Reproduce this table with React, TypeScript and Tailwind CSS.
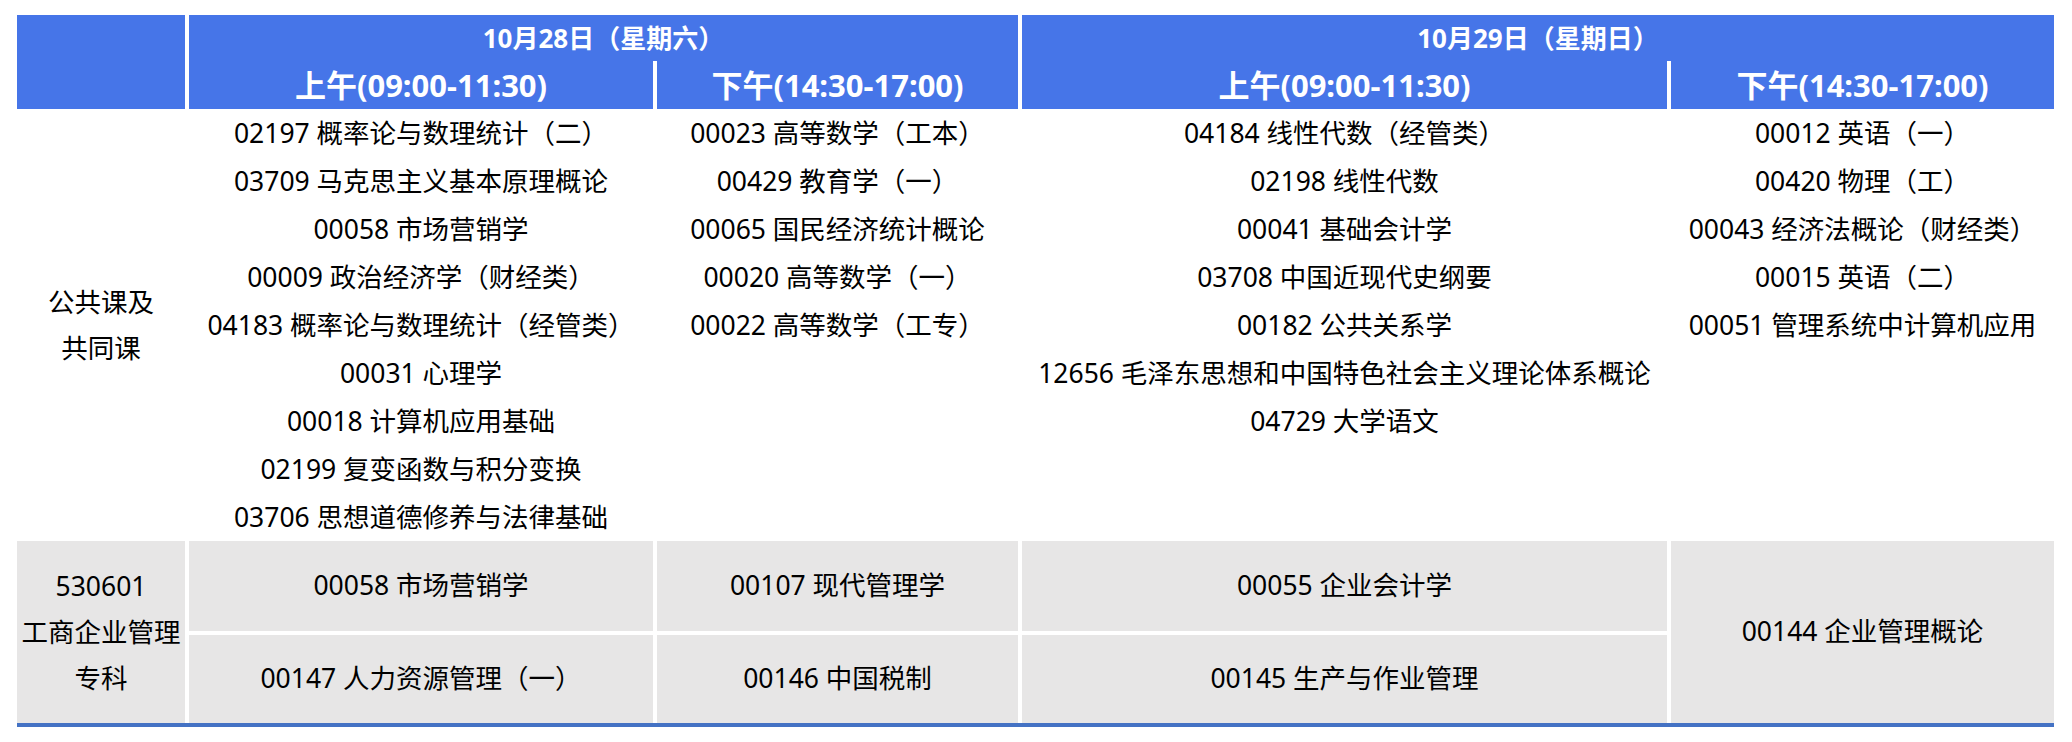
const day1Am = [
  "02197 概率论与数理统计（二）",
  "03709 马克思主义基本原理概论",
  "00058 市场营销学",
  "00009 政治经济学（财经类）",
  "04183 概率论与数理统计（经管类）",
  "00031 心理学",
  "00018 计算机应用基础",
  "02199 复变函数与积分变换",
  "03706 思想道德修养与法律基础",
];

const day1Pm = [
  "00023 高等数学（工本）",
  "00429 教育学（一）",
  "00065 国民经济统计概论",
  "00020 高等数学（一）",
  "00022 高等数学（工专）",
];

const day2Am = [
  "04184 线性代数（经管类）",
  "02198 线性代数",
  "00041 基础会计学",
  "03708 中国近现代史纲要",
  "00182 公共关系学",
  "12656 毛泽东思想和中国特色社会主义理论体系概论",
  "04729 大学语文",
];

const day2Pm = [
  "00012 英语（一）",
  "00420 物理（工）",
  "00043 经济法概论（财经类）",
  "00015 英语（二）",
  "00051 管理系统中计算机应用",
];

function CourseList({ items }: { items: string[] }) {
  return (
    <div className="flex flex-col items-center">
      {items.map((c) => (
        <div key={c} className="leading-[48px] whitespace-nowrap">
          {c}
        </div>
      ))}
    </div>
  );
}

export default function App() {
  const cols = "grid grid-cols-[168px_464px_361px_645px_383px] gap-x-1";
  return (
    <div className="min-h-[742px] w-full bg-white font-['Noto_Sans','Noto_Sans_CJK_SC',sans-serif] text-black">
      <div className="ml-[17px] pt-[15px] w-[2037px]">
        {/* header */}
        <div className={`${cols} grid-rows-[46px_48px] text-white font-bold`}>
          <div className="row-span-2 bg-[#4675e8]" />
          <div className="col-span-2 flex items-center justify-center bg-[#4675e8] text-[26px]">
            10月28日（星期六）
          </div>
          <div className="col-span-2 flex items-center justify-center bg-[#4675e8] text-[26px]">
            10月29日（星期日）
          </div>
          <div className="flex items-center justify-center bg-[#4675e8] text-[31px]">上午(09:00-11:30)</div>
          <div className="flex items-center justify-center bg-[#4675e8] text-[31px]">下午(14:30-17:00)</div>
          <div className="flex items-center justify-center bg-[#4675e8] text-[31px]">上午(09:00-11:30)</div>
          <div className="flex items-center justify-center bg-[#4675e8] text-[31px]">下午(14:30-17:00)</div>
        </div>

        {/* public courses */}
        <div className={`${cols} text-[26.5px]`}>
          <div className="flex flex-col items-center justify-center leading-[46px]">
            <span>公共课及</span>
            <span>共同课</span>
          </div>
          <CourseList items={day1Am} />
          <CourseList items={day1Pm} />
          <CourseList items={day2Am} />
          <CourseList items={day2Pm} />
        </div>

        {/* major courses */}
        <div className={`${cols} grid-rows-[90px_88px] gap-y-1 text-[26.5px]`}>
          <div className="row-span-2 flex flex-col items-center justify-center bg-[#e7e6e6] leading-[46px]">
            <span>530601</span>
            <span>工商企业管理</span>
            <span>专科</span>
          </div>
          <div className="flex items-center justify-center bg-[#e7e6e6]">00058 市场营销学</div>
          <div className="flex items-center justify-center bg-[#e7e6e6]">00107 现代管理学</div>
          <div className="flex items-center justify-center bg-[#e7e6e6]">00055 企业会计学</div>
          <div className="row-span-2 flex items-center justify-center bg-[#e7e6e6]">00144 企业管理概论</div>
          <div className="flex items-center justify-center bg-[#e7e6e6]">00147 人力资源管理（一）</div>
          <div className="flex items-center justify-center bg-[#e7e6e6]">00146 中国税制</div>
          <div className="flex items-center justify-center bg-[#e7e6e6]">00145 生产与作业管理</div>
        </div>
        <div className="h-1 bg-[#4472c4]" />
      </div>
    </div>
  );
}
